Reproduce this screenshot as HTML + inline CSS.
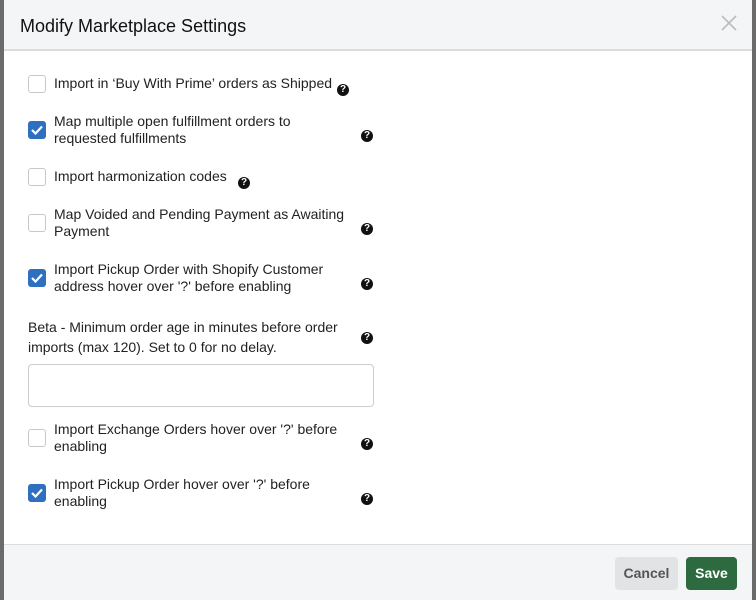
<!DOCTYPE html>
<html><head><style>
*{box-sizing:border-box;margin:0;padding:0}
body{width:756px;height:600px;overflow:hidden;background:#6b6b6b;font-family:"Liberation Sans",Arial,sans-serif;color:#212529;position:relative}
.m{position:absolute;left:4px;top:0;width:748px;height:600px;background:#fff}
.hd{height:51px;background:#f4f5f6;border-bottom:2px solid #dcdcdc;position:relative}
.hd h1{position:absolute;left:16px;top:16px;font-size:18px;font-weight:normal;color:#111}
.x{position:absolute;right:14px;top:14px;width:18px;height:18px}
.cb{position:absolute;left:24px;width:18px;height:18px;border:1px solid #c8c8c8;border-radius:3px;background:#fff}
.cb.on{background:#2f6fc0;border-color:#2f6fc0}
.cb.on svg{position:absolute;left:2px;top:3px}
.q{position:absolute;width:12px;height:12px;border-radius:50%;background:#111;color:#fff;font-size:10px;font-weight:bold;line-height:12px;text-align:center}
.t{position:absolute;left:50px;font-size:14px;line-height:17px;color:#222}
.inp{position:absolute;left:24px;top:364px;width:346px;height:43px;border:1px solid #ccc;border-radius:4px}
.ft{position:absolute;left:0;top:544px;width:748px;height:56px;background:#f4f5f6;border-top:1px solid #ddd}
.btn{position:absolute;top:12px;height:33px;border-radius:4px;font-weight:bold;font-size:14px;line-height:33px;text-align:center}
</style></head><body>
<div class="m">
<div class="hd"><h1>Modify Marketplace Settings</h1>
<svg class="x" viewBox="0 0 18 18"><path d="M2 2L16 16M16 2L2 16" stroke="#bbb" stroke-width="1.6"/></svg></div>

<div class="cb" style="top:75px"></div><div class="t" style="top:75px">Import in ‘Buy With Prime’ orders as Shipped</div><div class="q" style="left:333px;top:84px">?</div>

<div class="cb on" style="top:121px"><svg width="12" height="10" viewBox="0 0 12 10"><path d="M1 5l3.5 3.5L11 1.5" stroke="#fff" stroke-width="2.2" fill="none"/></svg></div><div class="t" style="top:113px">Map multiple open fulfillment orders to<br>requested fulfillments</div><div class="q" style="left:357px;top:130px">?</div>

<div class="cb" style="top:168px"></div><div class="t" style="top:168px">Import harmonization codes</div><div class="q" style="left:234px;top:177px">?</div>

<div class="cb" style="top:214px"></div><div class="t" style="top:206px">Map Voided and Pending Payment as Awaiting<br>Payment</div><div class="q" style="left:357px;top:223px">?</div>

<div class="cb on" style="top:269px"><svg width="12" height="10" viewBox="0 0 12 10"><path d="M1 5l3.5 3.5L11 1.5" stroke="#fff" stroke-width="2.2" fill="none"/></svg></div><div class="t" style="top:261px">Import Pickup Order with Shopify Customer<br>address hover over '?' before enabling</div><div class="q" style="left:357px;top:278px">?</div>

<div class="t" style="left:24px;top:317px;line-height:20px">Beta - Minimum order age in minutes before order<br>imports (max 120). Set to 0 for no delay.</div><div class="q" style="left:357px;top:332px">?</div>
<div class="inp"></div>

<div class="cb" style="top:429px"></div><div class="t" style="top:421px">Import Exchange Orders hover over '?' before<br>enabling</div><div class="q" style="left:357px;top:438px">?</div>

<div class="cb on" style="top:484px"><svg width="12" height="10" viewBox="0 0 12 10"><path d="M1 5l3.5 3.5L11 1.5" stroke="#fff" stroke-width="2.2" fill="none"/></svg></div><div class="t" style="top:476px">Import Pickup Order hover over '?' before<br>enabling</div><div class="q" style="left:357px;top:493px">?</div>

<div class="ft">
<div class="btn" style="left:611px;width:63px;background:#e2e3e5;color:#555">Cancel</div>
<div class="btn" style="left:682px;width:51px;background:#2d6a3f;color:#fff">Save</div>
</div>
</div>
</body></html>
